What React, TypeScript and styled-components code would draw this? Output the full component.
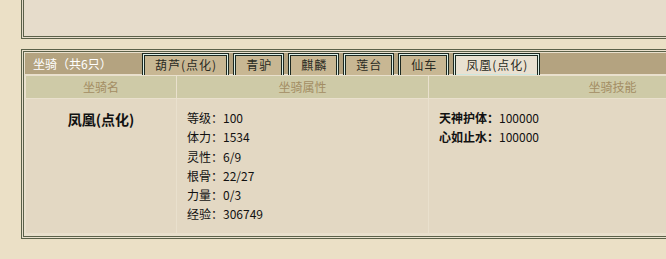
import styled, {createGlobalStyle} from "styled-components";

const GlobalStyle = createGlobalStyle`
    body {
        margin: 0;
        background-color: #EBE0C6;
        font-family: "Noto Sans CJK SC", "Liberation Sans", sans-serif;
        font-size: 12px;
        overflow: hidden;
    }
`;

const Page = styled.div`
    padding-left: 21px;
    width: 780px;
`;

const TopPanel = styled.div`
    height: 36px;
    background-color: #E6DCCB;
    border-left: 3px double #5B6149;
    border-bottom: 3px double #5B6149;
    margin-bottom: 10px;
`;

const Panel = styled.section`
    border: 3px double #5B6149;
    background-color: #E9E0CD;
    padding: 1px;
`;

const TabStrip = styled.div`
    display: flex;
    align-items: flex-end;
    height: 21px;
    background-color: #B4A380;
`;

const StripTitle = styled.div`
    width: 109px;
    padding-left: 8px;
    color: #FFFFFF;
    font-size: 12px;
    line-height: 20px;
    align-self: center;
`;

const Tabs = styled.div`
    display: flex;
    gap: 4px;
    height: 100%;
`;

const Tab = styled.div<{ $active?: boolean }>`
    box-sizing: border-box;
    height: 22px;
    padding: 2px 11px 0 12px;
    border: 1px solid #1C2820;
    border-bottom: none;
    box-shadow: inset 1px 1px 0 #DCEEE6, inset -1px 0 0 #DCEEE6,
        inset 2px 2px 0 #1C2820, inset -2px 0 0 #1C2820
        ${p => p.$active ? ", inset 0 -1px 0 #CDE6DD" : ""};
    background-color: ${p => p.$active ? "#E9E1D1" : "#C8B793"};
    color: #2A2A22;
    font-size: 12px;
    letter-spacing: 1px;
    line-height: 18px;
    white-space: nowrap;
    cursor: pointer;
`;

const Table = styled.div`
    display: grid;
    grid-template-columns: 150px 251px 1fr;
    gap: 1px;
    padding: 2px 1px 2px 1px;
`;

const HeadCell = styled.div`
    height: 22px;
    line-height: 22px;
    background-color: #CECAA7;
    color: #A38D63;
    text-align: center;
`;

const BodyCell = styled.div<{ $center?: boolean }>`
    height: 134px;
    box-sizing: border-box;
    padding: 9px 10px;
    background-color: #E3D8C3;
    text-align: ${p => p.$center ? "center" : "left"};
    color: #111;
`;

const MountName = styled.div`
    font-size: 14px;
    font-weight: bold;
    line-height: 22px;
`;

const Line = styled.div`
    line-height: 19.3px;
    white-space: nowrap;
`;

const SkillName = styled.span`
    font-weight: bold;
`;

const tabs = ["葫芦(点化)", "青驴", "麒麟", "莲台", "仙车", "凤凰(点化)"];

const stats = [
    ["等级", "100"],
    ["体力", "1534"],
    ["灵性", "6/9"],
    ["根骨", "22/27"],
    ["力量", "0/3"],
    ["经验", "306749"],
];

const skills = [
    ["天神护体", "100000"],
    ["心如止水", "100000"],
];

export default function App() {
    return (
        <Page>
            <GlobalStyle />
            <TopPanel />
            <Panel>
                <TabStrip>
                    <StripTitle>坐骑（共6只）</StripTitle>
                    <Tabs>
                        {tabs.map((t, i) => (
                            <Tab key={t} $active={i === tabs.length - 1}>{t}</Tab>
                        ))}
                    </Tabs>
                </TabStrip>
                <Table>
                    <HeadCell>坐骑名</HeadCell>
                    <HeadCell>坐骑属性</HeadCell>
                    <HeadCell>坐骑技能</HeadCell>
                    <BodyCell $center>
                        <MountName>凤凰(点化)</MountName>
                    </BodyCell>
                    <BodyCell>
                        {stats.map(([k, v]) => (
                            <Line key={k}>{k}：{v}</Line>
                        ))}
                    </BodyCell>
                    <BodyCell>
                        {skills.map(([k, v]) => (
                            <Line key={k}><SkillName>{k}：</SkillName>{v}</Line>
                        ))}
                    </BodyCell>
                </Table>
            </Panel>
        </Page>
    );
}
